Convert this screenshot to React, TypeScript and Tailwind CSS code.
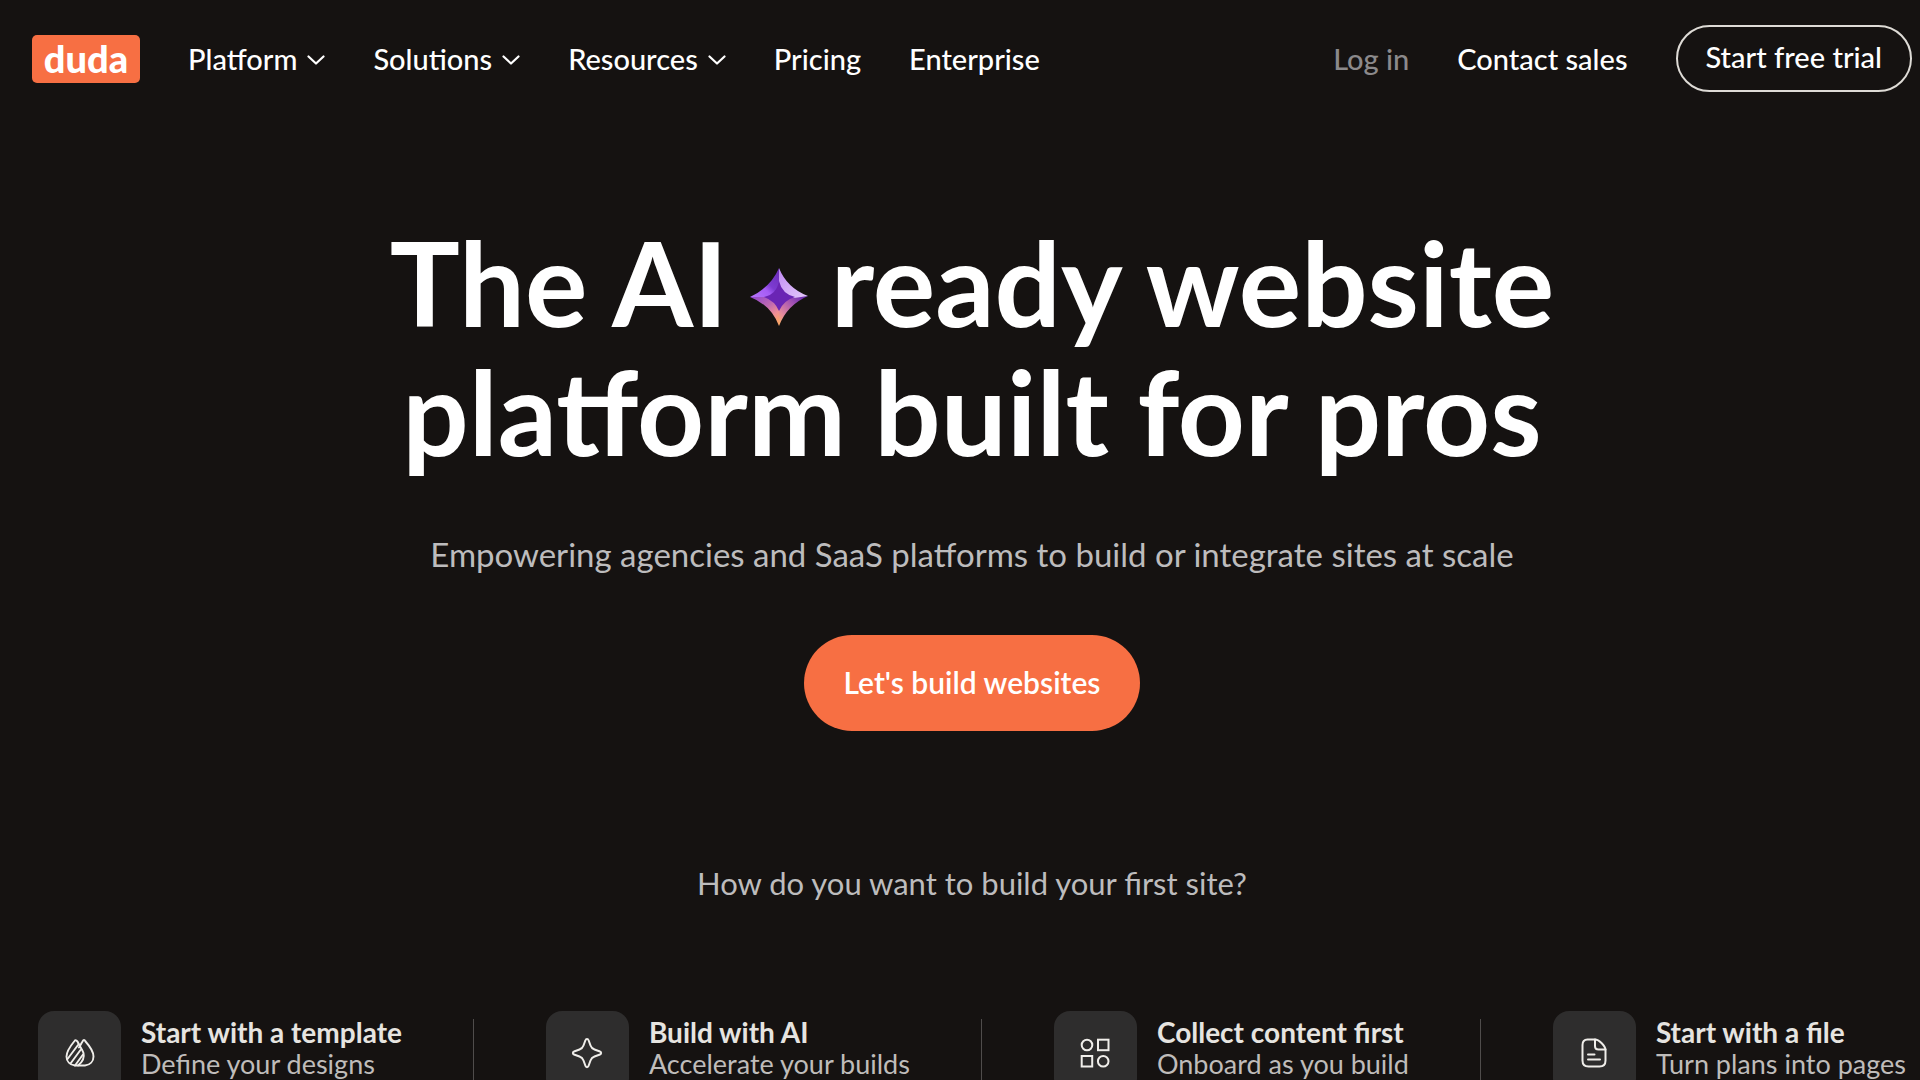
import type { ReactNode } from "react";

interface NavItemProps {
  label: string;
  hasMenu?: boolean;
}

interface StartOptionProps {
  title: string;
  description: string;
  icon: ReactNode;
}

const navItems: NavItemProps[] = [
  { label: "Platform", hasMenu: true },
  { label: "Solutions", hasMenu: true },
  { label: "Resources", hasMenu: true },
  { label: "Pricing" },
  { label: "Enterprise" },
];

const ChevronIcon = () => (
  <svg
    className="w-[18px] h-[18px]"
    viewBox="0 0 18 18"
    fill="none"
    stroke="currentColor"
    strokeWidth="2.2"
    strokeLinecap="round"
    strokeLinejoin="round"
    aria-hidden="true"
  >
    <path d="M1.500 6.500 9 13.500 16.500 6.500" />
  </svg>
);

const GemIcon = () => (
  <svg
    className="inline-block w-[60px] h-[60px] -mx-[7px] align-baseline"
    viewBox="0 0 60 60"
    aria-hidden="true"
  >
    <defs>
      <linearGradient id="gemBottomLeft" x1="0" y1="0" x2="0.7" y2="1">
        <stop offset="0" stopColor="#8f45cf" />
        <stop offset="0.5" stopColor="#c06ab0" />
        <stop offset="0.8" stopColor="#f08f95" />
        <stop offset="1" stopColor="#f7a06a" />
      </linearGradient>
      <linearGradient id="gemBottomRight" x1="1" y1="0" x2="0" y2="1">
        <stop offset="0" stopColor="#5a1fb0" />
        <stop offset="0.4" stopColor="#a554b4" />
        <stop offset="0.75" stopColor="#e58a9c" />
        <stop offset="1" stopColor="#ffb35c" />
      </linearGradient>
      <linearGradient id="gemTopRight" x1="0" y1="0" x2="1" y2="1">
        <stop offset="0" stopColor="#c08af5" />
        <stop offset="0.6" stopColor="#d7b2f8" />
        <stop offset="1" stopColor="#e4c8fb" />
      </linearGradient>
      <linearGradient id="gemTopLeft" x1="1" y1="0" x2="0" y2="1">
        <stop offset="0" stopColor="#6a2cb8" />
        <stop offset="0.45" stopColor="#7c3bd0" />
        <stop offset="0.6" stopColor="#a55cf5" />
        <stop offset="1" stopColor="#b676fa" />
      </linearGradient>
    </defs>
    <path d="M30 1Q22 20 1 30H30Z" fill="url(#gemTopLeft)" />
    <path d="M1 30Q22 38 30 59V30Z" fill="url(#gemBottomLeft)" />
    <path d="M59 29Q38 38 30 59V30Z" fill="url(#gemBottomRight)" />
    <path d="M30 1Q38 21 59 29L45 31Q33 27 30 17Z" fill="url(#gemTopRight)" />
    <path d="M30 14Q33 27 46 30Q35 33 30 44Q26 34 15 30Q28 27 30 14Z" fill="#6a25b4" />
  </svg>
);

const TemplateIcon = () => (
  <svg
    className="w-[30px] h-[30px]"
    viewBox="0 0 30 30"
    fill="none"
    stroke="currentColor"
    strokeWidth="1.900"
    strokeLinecap="round"
    strokeLinejoin="round"
    aria-hidden="true"
  >
    <path d="M13.500 5.500C12.500 2.500 10.500 1.500 9.500 3C5 8.500 1.500 13.500 1.500 18.500C1.500 23.500 5 27 10 27.500H20C25 27 28.500 23.500 28.500 18.500C28.500 13.500 25 8.500 20.500 3.500C19.500 1.500 18.500 1.500 17.500 3.500C16 6 15 8 14 9.500" />
    <path d="M13.500 5.500C14.500 8 17 11 18.500 15C19.500 19 17.500 24 13 27.500" />
    <path d="M13 7 2.500 21M15.500 12 5.500 25.500M18 16.500 10 27.500" />
  </svg>
);

const SparkleIcon = () => (
  <svg
    className="w-8 h-8"
    viewBox="0 0 32 32"
    fill="none"
    stroke="currentColor"
    strokeWidth="2"
    strokeLinejoin="round"
    aria-hidden="true"
  >
    <path d="M14.500 3C15 1.500 17 1.500 17.500 3L19.500 8.500C20.300 10.700 21.300 11.700 23.500 12.500L29 14.500C30.500 15 30.500 17 29 17.500L23.500 19.500C21.300 20.300 20.300 21.300 19.500 23.500L17.500 29C17 30.500 15 30.500 14.500 29L12.500 23.500C11.700 21.300 10.700 20.300 8.500 19.500L3 17.500C1.500 17 1.500 15 3 14.500L8.500 12.500C10.700 11.700 11.700 10.700 12.500 8.500Z" />
  </svg>
);

const ShapesIcon = () => (
  <svg
    className="w-[30px] h-[30px]"
    viewBox="0 0 30 30"
    fill="none"
    stroke="currentColor"
    strokeWidth="2"
    aria-hidden="true"
  >
    <circle cx="7" cy="7" r="5.300" />
    <rect x="18" y="1.700" width="10.500" height="10.500" />
    <rect x="1.700" y="18" width="10.500" height="10.500" />
    <circle cx="23.200" cy="23.200" r="5.300" />
  </svg>
);

const FileIcon = () => (
  <svg
    className="w-[30px] h-[30px]"
    viewBox="0 0 30 30"
    fill="none"
    stroke="currentColor"
    strokeWidth="2"
    strokeLinecap="round"
    strokeLinejoin="round"
    aria-hidden="true"
  >
    <path d="M8.500 1.500H16C20 1.500 26.500 8 26.500 12V22.500C26.500 26.500 24.500 28.500 20.500 28.500H9.500C5.500 28.500 3.500 26.500 3.500 22.500V7C3.500 3.500 5 1.500 8.500 1.500Z" />
    <path d="M16 1.500V8C16 10 17.500 11.500 19.500 11.500H26.500" />
    <path d="M9 16.500H15.500M9 21.500H21" />
  </svg>
);

const startOptions: StartOptionProps[] = [
  {
    title: "Start with a template",
    description: "Define your designs",
    icon: <TemplateIcon />,
  },
  {
    title: "Build with AI",
    description: "Accelerate your builds",
    icon: <SparkleIcon />,
  },
  {
    title: "Collect content first",
    description: "Onboard as you build",
    icon: <ShapesIcon />,
  },
  {
    title: "Start with a file",
    description: "Turn plans into pages",
    icon: <FileIcon />,
  },
];

const NavItem = ({ label, hasMenu }: NavItemProps) => {
  if (hasMenu) {
    return (
      <button type="button" className="flex items-center gap-[10px]">
        {label}
        <ChevronIcon />
      </button>
    );
  }
  return <a href="#">{label}</a>;
};

const Header = () => (
  <header className="flex items-center justify-between py-[25px] text-[29px] leading-[34px] font-medium whitespace-nowrap">
    <div className="flex items-center gap-12">
      <a
        href="#"
        className="w-[108px] h-12 rounded-[5px] bg-[#f76f43] text-center text-[38px] leading-[46px] font-black"
      >
        duda
      </a>
      <nav className="flex items-center gap-12">
        {navItems.map((item) => (
          <NavItem key={item.label} {...item} />
        ))}
      </nav>
    </div>
    <div className="flex items-center gap-12">
      <a href="#" className="text-[#8b898b]">
        Log in
      </a>
      <a href="#">Contact sales</a>
      <a
        href="#"
        className="px-7 pt-[13px] pb-4 rounded-full border-2 border-[#dedbd6]"
      >
        Start free trial
      </a>
    </div>
  </header>
);

const StartOption = ({ title, description, icon }: StartOptionProps) => (
  <a href="#" className="flex items-start gap-5 whitespace-nowrap">
    <span className="flex items-center justify-center w-[83px] h-[83px] rounded-2xl bg-[#2e2d2d] text-[#f0eeea]">
      {icon}
    </span>
    <span className="pt-[5px]">
      <strong className="block text-[28px] leading-8 font-bold text-[#e6e4e0]">
        {title}
      </strong>
      <span className="block text-[27px] leading-8 text-[#bfbcba]">
        {description}
      </span>
    </span>
  </a>
);

const App = () => {
  return (
    <div className="h-screen overflow-hidden pl-8 pr-2 bg-[#151211] text-white font-['Lato','Open_Sans',sans-serif]">
      <Header />
      <main className="flex flex-col items-center pt-[101px] text-center">
        <h1 className="text-[117px] leading-[129px] font-bold">
          The AI <GemIcon /> ready website
          <br />
          platform built for pros
        </h1>
        <p className="mt-[58px] text-[33px] leading-10 text-[#bdbcbd]">
          Empowering agencies and SaaS platforms to build or integrate sites at
          scale
        </p>
        <a
          href="#"
          className="mt-[61px] px-10 pt-[29px] pb-[31px] rounded-full bg-[#f76f43] text-[30px] leading-9 font-semibold"
        >
          Let's build websites
        </a>
        <p className="mt-[132px] text-[31px] leading-10 text-[#bdbcbd]">
          How do you want to build your first site?
        </p>
        <ul className="flex justify-between w-full mt-[108px] px-[6px] text-left">
          {startOptions.map((option, index) => (
            <li key={option.title} className="contents">
              {index > 0 && (
                <span className="w-px h-[67px] mt-2 bg-[#4f4c4b]" />
              )}
              <StartOption {...option} />
            </li>
          ))}
        </ul>
      </main>
    </div>
  );
};

export default App;
